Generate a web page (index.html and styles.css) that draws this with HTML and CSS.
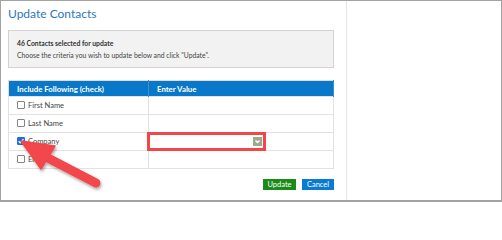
FILE: index.html
```html
<!DOCTYPE html>
<html>
<head>
<meta charset="utf-8">
<link rel="stylesheet" href="styles.css">
</head>
<body>
<div class="frame">
  <div class="main">
    <h1 class="title">Update Contacts</h1>
    <div class="info">
      <div class="info-strong">46 Contacts selected for update</div>
      <div>Choose the criteria you wish to update below and click "Update".</div>
    </div>
    <table class="grid">
      <thead>
        <tr><th class="col1">Include Following (check)</th><th>Enter Value</th></tr>
      </thead>
      <tbody>
        <tr><td><span class="cb"></span>First Name</td><td></td></tr>
        <tr><td><span class="cb"></span>Last Name</td><td></td></tr>
        <tr><td><span class="cb checked"><svg viewBox="0 0 8 8" width="8" height="8"><path d="M1.6 4.2 L3.3 5.8 L6.4 2.2" fill="none" stroke="#fff" stroke-width="1.3"/></svg></span>Company</td>
          <td class="valcell">
            <div class="select"><span class="sel-arrow"><svg viewBox="0 0 9 9" width="9" height="9"><path d="M2.5 3.5 L4.5 5.5 L6.5 3.5" fill="none" stroke="#fff" stroke-width="1.4"/></svg></span></div>
            <div class="annot"></div>
          </td></tr>
        <tr><td><span class="cb"></span>Email</td><td></td></tr>
      </tbody>
    </table>
    <div class="actions">
      <button class="btn btn-green">Update</button>
      <button class="btn btn-blue">Cancel</button>
    </div>
  </div>
  <div class="side"></div>
  <svg class="arrow" width="502" height="202" viewBox="0 0 502 202">
    <defs>
      <filter id="sh" x="-20%" y="-20%" width="140%" height="140%">
        <feDropShadow dx="1" dy="2" stdDeviation="1.5" flood-color="#000" flood-opacity="0.35"/>
      </filter>
    </defs>
    <g filter="url(#sh)" fill="#f2464b" stroke="#f2464b">
      <line x1="46" y1="157" x2="96" y2="183" stroke-width="9" stroke-linecap="round"/>
      <polygon points="21,141 55,146 41,169" stroke-width="1.5" stroke-linejoin="round"/>
    </g>
  </svg>
</div>
</body>
</html>
```

FILE: styles.css
```css
html, body {
  margin: 0;
  padding: 0;
  background: #fff;
}
body {
  font-family: "Lato", "Open Sans", sans-serif;
  color: #333;
}
.frame {
  position: relative;
  width: 502px;
  height: 202px;
  box-sizing: border-box;
  border: 1px solid #a3a3a3;
  border-bottom-width: 2px;
  display: flex;
  overflow: hidden;
}
.main {
  width: 346px;
  box-sizing: border-box;
  border-right: 1px solid #e6e6e6;
  padding: 0 12px 0 7px;
}
.side {
  flex: 1;
}
.title {
  margin: 0;
  height: 29px;
  box-sizing: border-box;
  padding-top: 5px;
  font-size: 12px;
  line-height: 16px;
  font-weight: 400;
  color: #2a78c0;
}
.info {
  height: 38px;
  box-sizing: border-box;
  border: 1px solid #d2d2d2;
  background: #f2f2f2;
  padding: 6px 8px 0;
  font-size: 6.8px;
  line-height: 12px;
  color: #444;
}
.info-strong {
  font-weight: 700;
  color: #333;
}
.grid {
  margin-top: 12px;
  width: 100%;
  border-collapse: collapse;
  border: 1px solid #dcdcdc;
  font-size: 7.5px;
}
.grid thead tr {
  height: 16px;
}
.grid tbody tr {
  height: 18px;
}
.grid th {
  padding: 0 0 0 8px;
  background: #0a78c8;
  color: #fff;
  text-align: left;
  font-weight: 700;
  font-size: 7.8px;
  line-height: 10px;
  border-right: 1px solid #3b8fd0;
}
.grid th.col1 {
  width: 131px;
}
.grid td {
  padding: 0 0 0 8px;
  line-height: 10px;
  border: 1px solid #e2e2e2;
  color: #444;
  vertical-align: middle;
}
.cb {
  display: inline-block;
  width: 8px;
  height: 8px;
  box-sizing: border-box;
  border: 1px solid #858585;
  border-radius: 1px;
  vertical-align: -1px;
  margin-right: 3px;
  background: #fff;
  position: relative;
}
.cb.checked {
  background: #1a6fe0;
  border-color: #1a6fe0;
}
.cb.checked svg {
  position: absolute;
  left: -1px;
  top: -1px;
}
.grid td.valcell {
  position: relative;
  padding: 0;
}
.select {
  width: 110px;
  height: 11px;
  margin-left: 3px;
  display: flex;
  justify-content: flex-end;
  align-items: center;
}
.sel-arrow {
  width: 9px;
  height: 9px;
  background: #9cab8c;
  display: flex;
}
.annot {
  position: absolute;
  left: -2px;
  top: -1px;
  width: 119px;
  height: 19px;
  box-sizing: border-box;
  border: 3px solid #f2464b;
}
.actions {
  margin-top: 10px;
  display: flex;
  justify-content: flex-end;
  gap: 6px;
}
.btn {
  height: 11px;
  padding: 0;
  border: none;
  font-family: "Lato", sans-serif;
  font-size: 7.5px;
  line-height: 11px;
  color: #fff;
  cursor: pointer;
}
.btn-green {
  width: 33px;
  background: #1b8a17;
}
.btn-blue {
  width: 32px;
  background: #0a7ad2;
}
.arrow {
  position: absolute;
  left: -1px;
  top: -1px;
  pointer-events: none;
}
```
